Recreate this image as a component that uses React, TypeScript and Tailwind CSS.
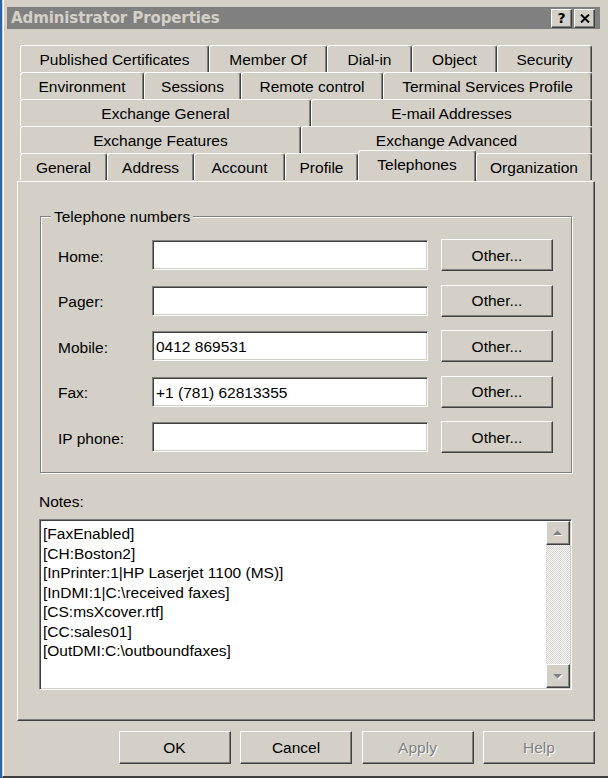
import React from "react";

const raised =
  "border border-t-white border-l-white border-r-[#404040] border-b-[#404040] shadow-[inset_-1px_-1px_0_#808080,inset_1px_1px_0_#d4d0c8] bg-[#d4d0c8]";
const sunken =
  "border border-t-[#808080] border-l-[#808080] border-r-white border-b-white shadow-[inset_1px_1px_0_#404040,inset_-1px_-1px_0_#d4d0c8]";

type TabDef = { label: string; w: string; selected?: boolean };

const rows: TabDef[][] = [
  [
    { label: "Published Certificates", w: "w-[189px]" },
    { label: "Member Of", w: "w-[118px]" },
    { label: "Dial-in", w: "w-[85px]" },
    { label: "Object", w: "w-[85px]" },
    { label: "Security", w: "w-[95px]" },
  ],
  [
    { label: "Environment", w: "w-[124px]" },
    { label: "Sessions", w: "w-[97px]" },
    { label: "Remote control", w: "w-[142px]" },
    { label: "Terminal Services Profile", w: "w-[209px]" },
  ],
  [
    { label: "Exchange General", w: "w-[291px]" },
    { label: "E-mail Addresses", w: "w-[281px]" },
  ],
  [
    { label: "Exchange Features", w: "w-[281px]" },
    { label: "Exchange Advanced", w: "w-[291px]" },
  ],
  [
    { label: "General", w: "w-[87px]" },
    { label: "Address", w: "w-[87px]" },
    { label: "Account", w: "w-[91px]" },
    { label: "Profile", w: "w-[73px]" },
    { label: "Telephones", w: "w-[118px]", selected: true },
    { label: "Organization", w: "w-[116px]" },
  ],
];

function Tab({ t }: { t: TabDef }) {
  const base =
    "shrink-0 flex items-center justify-center border-t border-l border-white border-r border-r-[#404040] shadow-[inset_-1px_0_0_#808080] rounded-tl-[3px] rounded-tr-[3px] bg-[#d4d0c8] whitespace-nowrap";
  if (t.selected) {
    return (
      <div className={`${base} ${t.w} relative z-10 -mt-[3px] h-[31px] pb-[4px]`}>
        {t.label}
      </div>
    );
  }
  return <div className={`${base} ${t.w} h-[27px] pt-[1px]`}>{t.label}</div>;
}

const phones: { label: string; value: string }[] = [
  { label: "Home:", value: "" },
  { label: "Pager:", value: "" },
  { label: "Mobile:", value: "0412 869531" },
  { label: "Fax:", value: "+1 (781) 62813355" },
  { label: "IP phone:", value: "" },
];

const notes = [
  "[FaxEnabled]",
  "[CH:Boston2]",
  "[InPrinter:1|HP Laserjet 1100 (MS)]",
  "[InDMI:1|C:\\received faxes]",
  "[CS:msXcover.rtf]",
  "[CC:sales01]",
  "[OutDMI:C:\\outboundfaxes]",
];

function Arrow({ up }: { up?: boolean }) {
  return (
    <svg width="12" height="7" viewBox="0 0 12 7">
      {up ? (
        <>
          <path d="M6.5 1.5 L11 6 H2 Z" fill="#ffffff" />
          <path d="M5.5 0.5 L10 5 H1 Z" fill="#808080" />
        </>
      ) : (
        <>
          <path d="M2 2 H11 L6.5 6.5 Z" fill="#ffffff" />
          <path d="M1 1 H10 L5.5 5.5 Z" fill="#808080" />
        </>
      )}
    </svg>
  );
}

export default function App() {
  return (
    <div className="w-[608px] h-[778px] flex bg-[#3a6ea5] overflow-hidden font-['Liberation_Sans',Arial,sans-serif] text-[15.5px] text-black leading-[19px]">
      <div className="w-[2px] shrink-0 bg-[#2d62a8]" />
      <div className="flex-1 flex flex-col bg-[#d4d0c8] border-l border-l-[#d4d0c8] border-b-2 border-b-[#404040] shadow-[inset_1px_0_0_#ffffff] pl-[4px] pt-[7px] pr-[8px]">
        {/* Title bar */}
        <div className="h-[22px] bg-[#808080] flex items-center pl-[4px] pr-[5px]">
          <span className="font-['DejaVu_Sans',sans-serif] font-bold text-[15px] text-[#d4d0c8] tracking-[-0.1px]">
            Administrator Properties
          </span>
          <div className="ml-auto flex gap-[2px]">
            <div className={`${raised} w-[21px] h-[19px] flex items-center justify-center font-['DejaVu_Sans',sans-serif] font-bold text-[14px] leading-none`}>
              ?
            </div>
            <div className={`${raised} w-[21px] h-[19px] flex items-center justify-center`}>
              <svg width="10" height="9" viewBox="0 0 10 9">
                <path d="M1 0.5 L9 8.5 M9 0.5 L1 8.5" stroke="#000" strokeWidth="2" />
              </svg>
            </div>
          </div>
        </div>

        {/* Tabs */}
        <div className="ml-[13px] w-[572px] mt-[16px] flex flex-col">
          {rows.map((r, i) => (
            <div key={i} className="flex">
              {r.map((t) => (
                <Tab key={t.label} t={t} />
              ))}
            </div>
          ))}
        </div>

        {/* Panel */}
        <div className="ml-[10px] w-[578px] h-[540px] border-t border-l border-white border-r border-b border-r-[#404040] border-b-[#404040] shadow-[inset_-1px_-1px_0_#808080] pl-[22px] pt-[34px] flex flex-col">
          <div className="relative w-[532px] h-[257px] border border-[#808080] shadow-[inset_1px_1px_0_#ffffff,1px_1px_0_#ffffff] pt-[22px] pl-[17px]">
            <span className="absolute left-[10px] -top-[10px] px-[3px] bg-[#d4d0c8]">
              Telephone numbers
            </span>
            <div className="flex flex-col gap-[13.5px]">
              {phones.map((p) => (
                <div key={p.label} className="flex items-center h-[32px]">
                  <div className="w-[94px] pt-[2px]">{p.label}</div>
                  <div className={`${sunken} bg-white w-[276px] h-[30px] flex items-center pl-[3px] pt-[1px]`}>
                    {p.value}
                  </div>
                  <div className={`${raised} ml-[13px] w-[112px] h-[32px] flex items-center justify-center`}>
                    Other...
                  </div>
                </div>
              ))}
            </div>
          </div>

          <div className="mt-[19px] -ml-[1px]">Notes:</div>
          <div className={`${sunken} -ml-[1px] mt-[8px] w-[533px] h-[171px] bg-white flex p-[1px]`}>
            <div className="flex-1 pl-[2px] pt-[3px] leading-[19.5px]">
              {notes.map((n) => (
                <div key={n} className="whitespace-pre">
                  {n}
                </div>
              ))}
            </div>
            <div className="w-[24px] flex flex-col">
              <div className={`${raised} h-[24px] flex items-center justify-center`}>
                <Arrow up />
              </div>
              <div className="flex-1 bg-[image:repeating-conic-gradient(#d4d0c8_0%_25%,#ffffff_0%_50%)] bg-[length:2px_2px]" />
              <div className={`${raised} h-[24px] flex items-center justify-center`}>
                <Arrow />
              </div>
            </div>
          </div>
        </div>

        {/* Buttons */}
        <div className="ml-[10px] w-[578px] mt-[10px] flex justify-end gap-[9.5px]">
          <div className={`${raised} w-[112px] h-[33px] flex items-center justify-center`}>OK</div>
          <div className={`${raised} w-[112px] h-[33px] flex items-center justify-center`}>Cancel</div>
          <div className={`${raised} w-[112px] h-[33px] flex items-center justify-center text-[#808080] [text-shadow:1px_1px_0_#ffffff]`}>
            Apply
          </div>
          <div className={`${raised} w-[112px] h-[33px] flex items-center justify-center text-[#808080] [text-shadow:1px_1px_0_#ffffff]`}>
            Help
          </div>
        </div>
      </div>
    </div>
  );
}
